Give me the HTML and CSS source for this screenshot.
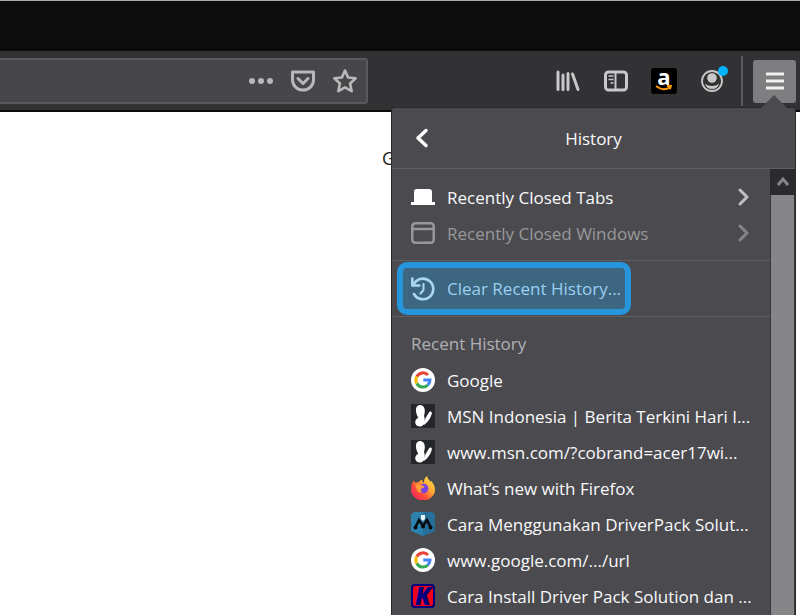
FILE: index.html
```html
<!DOCTYPE html>
<html lang="en">
<head>
  <meta charset="UTF-8">
  <title>History</title>
  <link rel="stylesheet" href="styles.css">
</head>
<body>

  <!-- Shared icons -->
  <svg width="0" height="0" class="defs" aria-hidden="true">
    <symbol id="google" viewBox="0 0 24 24">
      <circle cx="12" cy="12" r="12" fill="#fff"/>
      <g fill="none" stroke-width="3">
        <path d="M5.800 8.500A7 7 0 0 1 17 7" stroke="#ea4335"/>
        <path d="M5.800 15.500A7 7 0 0 1 5.800 8.500" stroke="#fbbc05"/>
        <path d="M16.700 17.200A7 7 0 0 1 5.800 15.500" stroke="#34a853"/>
        <path d="M12.300 12H19A7 7 0 0 1 16.700 17.200" stroke="#4285f4"/>
      </g>
    </symbol>
    <symbol id="msn" viewBox="0 0 24 24">
      <rect width="24" height="24" fill="#252629"/>
      <path d="M7 1.500c3.500-1.800 6.800 1 6.800 5 0 2.500-.4 4-.8 5.500 1 2 .8 4.500.2 7-.6 2.500-2.700 4-4.800 3.500-3.500-.6-4.600-3.200-4-5.500.4-1.500 1.600-2.800 3-3.600C5 11 3.500 3.500 7 1.500z" fill="#fff"/>
      <path d="M20 7.500c1.400.6.900 2.400.2 4-1.200 3.200-3.300 6.300-6.600 9-.8.6-1.500.2-1.200-.8 1-3.800 3.400-7.600 5.400-11 .6-1 1.400-1.500 2.200-1.200z" fill="#fff"/>
    </symbol>
    <symbol id="chevron" viewBox="0 0 12 18">
      <path d="M2 2l7 7-7 7" fill="none" stroke="currentColor" stroke-width="3" stroke-linecap="round" stroke-linejoin="round"/>
    </symbol>
  </svg>

  <div class="titlebar"></div>

  <!-- Toolbar -->
  <div class="toolbar">
    <div class="urlbar">
      <button class="tool" aria-label="Page actions">
        <svg width="26" height="26" fill="#b8b8ba"><circle cx="4" cy="13" r="3"/><circle cx="13" cy="13" r="3"/><circle cx="22" cy="13" r="3"/></svg>
      </button>
      <button class="tool" aria-label="Save to Pocket">
        <svg width="26" height="26" fill="none" stroke="#b8b8ba" stroke-width="3" stroke-linejoin="round" stroke-linecap="round"><path d="M2.500 4h21v8a10.500 10 0 0 1-21 0z"/><path d="M8 10.500l5 5 5-5"/></svg>
      </button>
      <button class="tool" aria-label="Bookmark this page">
        <svg width="26" height="26" fill="none" stroke="#b8b8ba" stroke-width="2.600" stroke-linejoin="round"><path d="M13 2.500l3.100 7 7.600.8-5.600 5.200 1.600 7.700-6.700-3.900-6.700 3.900 1.600-7.700-5.600-5.200 7.600-.8z"/></svg>
      </button>
    </div>
    <div class="tools">
      <button class="tool" aria-label="Library">
        <svg width="26" height="26" fill="none" stroke="#c8c8ca" stroke-width="3" stroke-linecap="round"><path d="M3 4v17.500M8 7v14.500M13 5.500v16M17.500 6l5.500 15.500"/></svg>
      </button>
      <button class="tool" aria-label="Sidebars">
        <svg width="26" height="26" fill="none" stroke="#c8c8ca"><rect x="2.500" y="4" width="21" height="18" rx="3" stroke-width="3"/><path d="M12.500 4v18" stroke-width="2"/><path d="M5.500 8h5M5.500 11.500h5M7.500 15h3" stroke-width="1.600"/></svg>
      </button>
      <button class="tool amazon" aria-label="Amazon">
        <span>a</span>
        <svg width="20" height="6" fill="none" stroke="#f90" stroke-width="1.800"><path d="M2 1q8 6 14 1M13 1l4-.2-1 3.500"/></svg>
      </button>
      <button class="tool account" aria-label="Account">
        <svg width="26" height="26"><circle cx="13" cy="13" r="10" fill="none" stroke="#c8c8ca" stroke-width="1.800"/><circle cx="13" cy="10" r="4.800" fill="#c8c8ca"/><path d="M6 15.500q2.500 2.500 7 2.500t7-2.500q-1.500 5.500-7 5.500t-7-5.500z" fill="#c8c8ca"/></svg>
        <span class="dot"></span>
      </button>
      <div class="divider"></div>
      <button class="menu-button" aria-label="Open menu">
        <svg width="20" height="20" stroke="#f0f0f0" stroke-width="3"><path d="M1 3h18M1 10h18M1 17h18"/></svg>
      </button>
    </div>
  </div>

  <main class="page">G</main>

  <!-- History panel -->
  <div class="panel">
    <div class="panel-header">
      <button class="back" aria-label="Back">
        <svg width="14" height="20" fill="none" stroke="#fff" stroke-width="3.500" stroke-linecap="round" stroke-linejoin="round"><path d="M11 2.500L3 10l8 7.500"/></svg>
      </button>
      <h1>History</h1>
    </div>
    <div class="panel-body">
      <div class="list">
        <div class="group">
          <button class="item">
            <svg class="icon" viewBox="0 0 24 24" fill="#fff"><path d="M3 17V7q0-3 3-3h12q3 0 3 3v10h3v3H0v-3z"/></svg>
            <span>Recently Closed Tabs</span>
            <svg class="arrow"><use href="#chevron"/></svg>
          </button>
          <button class="item" disabled>
            <svg class="icon" viewBox="0 0 24 24" fill="none" stroke="currentColor" stroke-width="2.500"><rect x="1.300" y="2.300" width="21.400" height="19.400" rx="3"/><path d="M1 8h22"/></svg>
            <span>Recently Closed Windows</span>
            <svg class="arrow"><use href="#chevron"/></svg>
          </button>
        </div>

        <div class="clear">
          <button class="clear-button">
            <svg class="icon" viewBox="0 0 24 24" fill="none" stroke="#a9d8f5" stroke-linecap="round" stroke-linejoin="round"><path d="M2.500 8A10.300 10.300 0 1 1 3 17" stroke-width="2.600"/><path d="M1.300 1.500v7h7" stroke-width="2.600"/><path d="M12.500 7v6l-3 3.500" stroke-width="2"/></svg>
            <span>Clear Recent History...</span>
          </button>
        </div>

        <h2>Recent History</h2>
        <a class="item" href="#"><svg class="icon"><use href="#google"/></svg><span>Google</span></a>
        <a class="item" href="#"><svg class="icon"><use href="#msn"/></svg><span>MSN Indonesia | Berita Terkini Hari I...</span></a>
        <a class="item" href="#"><svg class="icon"><use href="#msn"/></svg><span>www.msn.com/?cobrand=acer17wi...</span></a>
        <a class="item" href="#">
          <svg class="icon" viewBox="0 0 24 24">
            <defs>
              <linearGradient id="flame" x1="1" y1="0" x2="0" y2="1"><stop offset="0" stop-color="#fff04a"/><stop offset=".4" stop-color="#ffa436"/><stop offset=".65" stop-color="#ff4a3a"/><stop offset="1" stop-color="#e8186e"/></linearGradient>
            </defs>
            <path d="M2.500 4.500q1 2 2.500 2.200 1.500-.8 3-.7Q9 4 11 3.500q.2 2.500 2 3.500-.5-4.500 3-7 .5 3 3 5l.8 1.500.2-2q4 5 4 9a12 11 0 0 1-24 0Q0 8 2.500 4.500z" fill="url(#flame)"/>
            <circle cx="12.500" cy="12.500" r="4.800" fill="#7542e5"/>
            <path d="M4 8.500q4-1.500 7 1 2 .1 2.500 1-1 2-3.500 2.200-1 2 1.500 3.300-5 1.500-6-3z" fill="#ff9a36"/>
          </svg>
          <span>What’s new with Firefox</span>
        </a>
        <a class="item" href="#">
          <svg class="icon" viewBox="0 0 24 24"><path d="M0 2q2-.2 3-2h18q1 1.800 3 2v17l-12 5-12-5z" fill="#2d82ad"/><path d="M12 0h9q1 1.800 3 2v17l-12 5z" fill="#256f99"/><path d="M4.500 15L8 8l4 6 4-6 3.500 7" fill="none" stroke="#080c10" stroke-width="2.600"/><g fill="#080c10"><circle cx="4.500" cy="15.500" r="2"/><circle cx="12" cy="14.500" r="2"/><circle cx="19.500" cy="15.500" r="2"/></g><path d="M10 3h4v4l-2 2-2-2z" fill="#e8f4fa"/></svg>
          <span>Cara Menggunakan DriverPack Solut...</span>
        </a>
        <a class="item" href="#"><svg class="icon"><use href="#google"/></svg><span>www.google.com/.../url</span></a>
        <a class="item" href="#"><b class="icon k-icon" aria-hidden="true">K</b><span>Cara Install Driver Pack Solution dan ...</span></a>
      </div>
      <div class="scrollbar">
        <button class="scroll-up" aria-label="Scroll up">
          <svg width="12" height="12" fill="none" stroke="#858587" stroke-width="3"><path d="M1 9l5-6 5 6"/></svg>
        </button>
        <div class="thumb"></div>
      </div>
    </div>
  </div>

</body>
</html>
```

FILE: styles.css
```css
* {
  box-sizing: border-box;
}

body {
  margin: 0;
  height: 100vh;
  display: flex;
  flex-direction: column;
  position: relative;
  overflow: hidden;
  background: #fff;
  color: #f9f9fa;
  font-family: "Open Sans", "Noto Sans", sans-serif;
  font-size: 17px;
}

button {
  padding: 0;
  border: 0;
  background: none;
  color: inherit;
  font: inherit;
  cursor: pointer;
}

svg {
  display: block;
}

.defs {
  position: absolute;
}

/* Window chrome */
.titlebar {
  height: 51px;
  background: #0c0c0c;
  border-top: 1px solid #a8abad;
}

.toolbar {
  height: 61px;
  display: flex;
  justify-content: space-between;
  align-items: flex-start;
  padding: 7px 4px 0 0;
  background: #323234;
  border-bottom: 2px solid #0c0c0d;
}

.urlbar {
  flex: 1;
  height: 46px;
  display: flex;
  align-items: center;
  justify-content: flex-end;
  gap: 16px;
  margin-right: 187px;
  padding-right: 8px;
  background: #474749;
  border: 2px solid #5a5a5c;
  border-left: 0;
  border-radius: 0 3px 3px 0;
}

.tools {
  height: 46px;
  display: flex;
  align-items: center;
  gap: 22px;
}

.tool {
  width: 26px;
  height: 26px;
}

.amazon {
  display: flex;
  flex-direction: column;
  align-items: center;
  background: #000;
  border-radius: 3px;
  color: #fff;
  font-size: 22px;
  font-weight: bold;
  line-height: 17px;
}

.account {
  position: relative;
}

.dot {
  position: absolute;
  top: -2px;
  right: -3px;
  width: 10px;
  height: 10px;
  border-radius: 50%;
  background: #00b3ff;
}

.divider {
  width: 2px;
  height: 50px;
  margin: 0 -12px 0 -6px;
  background: #5a5a5c;
}

.menu-button {
  width: 43px;
  height: 43px;
  display: flex;
  align-items: center;
  justify-content: center;
  background: #7e7e80;
  border-radius: 3px;
}

.page {
  flex: 1;
  padding: 34px 0 0 382px;
  color: #222;
  font-size: 18px;
  line-height: 24px;
}

/* Panel */
.panel {
  position: absolute;
  top: 107px;
  right: 4px;
  bottom: 0;
  width: 405px;
  display: flex;
  flex-direction: column;
  background: #4a4a4f;
  border: 1px solid #2a2a2d;
  border-bottom: 0;
  border-radius: 3px 3px 0 0;
}

.panel::before {
  content: "";
  position: absolute;
  top: -13px;
  right: 7px;
  border: 14px solid transparent;
  border-top: 0;
  border-bottom-color: #4a4a4f;
}

.panel-header {
  height: 61px;
  display: flex;
  align-items: center;
  padding: 0 23px;
  border-bottom: 1px solid #5f5f63;
}

.panel-header h1 {
  flex: 1;
  margin: 0 14px 0 0;
  font-size: 17px;
  font-weight: 500;
  text-align: center;
}

.panel-body {
  flex: 1;
  min-height: 0;
  display: flex;
}

.list {
  flex: 1;
  min-width: 0;
  overflow: hidden;
}

.group {
  padding: 10px 0 9px;
}

.item {
  width: 100%;
  height: 36px;
  display: flex;
  align-items: center;
  gap: 12px;
  padding: 0 20px 0 19px;
  color: #f9f9fa;
  text-align: left;
  text-decoration: none;
  white-space: nowrap;
}

.item:disabled {
  color: #98989b;
}

.icon {
  flex: none;
  width: 24px;
  height: 24px;
}

.arrow {
  width: 12px;
  height: 18px;
  margin-left: auto;
  color: #c0c0c2;
}

.item:disabled .arrow {
  color: #858588;
}

.clear {
  padding: 1px 5px;
  border: 1px solid #5f5f63;
  border-width: 1px 0;
}

.clear-button {
  height: 53px;
  display: flex;
  align-items: center;
  gap: 12px;
  padding: 0 4px 0 8px;
  background: #3d6681;
  border: 6px solid #2795dc;
  border-radius: 10px;
  color: #9bd0f2;
  white-space: nowrap;
}

.list h2 {
  height: 36px;
  margin: 9px 0 0;
  padding-left: 19px;
  color: #b1b1b5;
  font-size: 17px;
  font-weight: normal;
  line-height: 36px;
}

.k-icon {
  background: #f00018;
  border: 2px solid #000080;
  border-radius: 4px;
  color: #000080;
  font-size: 24px;
  font-style: italic;
  font-weight: 800;
  line-height: 20px;
  text-align: center;
}

/* Scrollbar */
.scrollbar {
  width: 25px;
  display: flex;
  flex-direction: column;
  background: #38383b;
}

.scroll-up {
  height: 26px;
  display: flex;
  align-items: center;
  justify-content: center;
  background: #2b2b2d;
}

.thumb {
  flex: 1;
  margin: 0 1px;
  background: #868688;
}
```
